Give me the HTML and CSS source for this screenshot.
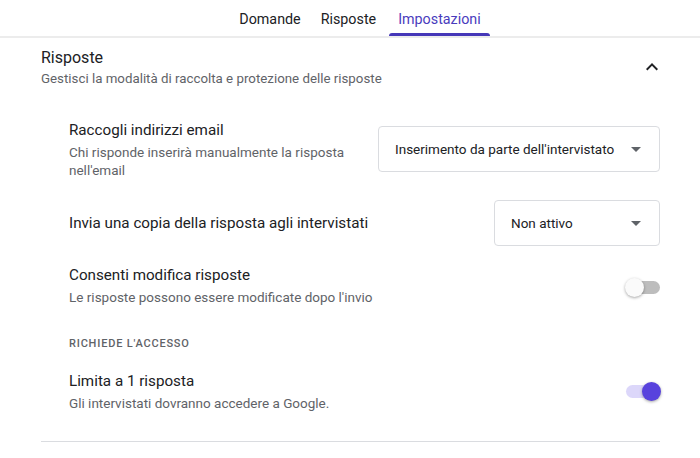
FILE: index.html
```html
<!DOCTYPE html>
<html lang="it">
<head>
    <meta charset="UTF-8">
    <meta name="viewport" content="width=device-width, initial-scale=1.0">
    <title>Impostazioni</title>
    <link rel="stylesheet" href="styles.css">
</head>
<body>
    <nav class="tabs">
        <a class="tab">Domande</a>
        <a class="tab">Risposte</a>
        <a class="tab active">Impostazioni</a>
    </nav>

    <section class="panel">
        <div class="panel-head">
            <div>
                <div class="panel-title">Risposte</div>
                <div class="panel-sub">Gestisci la modalità di raccolta e protezione delle risposte</div>
            </div>
            <svg class="chevron" width="24" height="24" viewBox="0 0 24 24"><path d="M7.4 15.4 12 10.8l4.6 4.6L18 14l-6-6-6 6z"/></svg>
        </div>

        <div class="rows">
            <div class="row row-email">
                <div class="row-text">
                    <div class="row-title">Raccogli indirizzi email</div>
                    <div class="row-sub">Chi risponde inserirà manualmente la risposta nell'email</div>
                </div>
                <div class="select select-wide">
                    <span>Inserimento da parte dell'intervistato</span>
                    <span class="caret"></span>
                </div>
            </div>

            <div class="row row-copy">
                <div class="row-text">
                    <div class="row-title">Invia una copia della risposta agli intervistati</div>
                </div>
                <div class="select select-narrow">
                    <span>Non attivo</span>
                    <span class="caret"></span>
                </div>
            </div>

            <div class="row row-edit">
                <div class="row-text">
                    <div class="row-title">Consenti modifica risposte</div>
                    <div class="row-sub">Le risposte possono essere modificate dopo l'invio</div>
                </div>
                <div class="switch"><span class="thumb"></span></div>
            </div>

            <div class="group-label">Richiede l'accesso</div>

            <div class="row row-limit">
                <div class="row-text">
                    <div class="row-title">Limita a 1 risposta</div>
                    <div class="row-sub">Gli intervistati dovranno accedere a Google.</div>
                </div>
                <div class="switch on"><span class="thumb"></span></div>
            </div>
        </div>
    </section>
</body>
</html>
```

FILE: styles.css
```css
body {
    font-family: Roboto, 'Liberation Sans', sans-serif;
    background-color: #fff;
    margin: 0;
    color: #202124;
}
.tabs {
    display: flex;
    justify-content: center;
    height: 36px;
    border-bottom: 2px solid #ececec;
    padding-left: 20px;
}
.tab {
    font-size: 14.3px;
    font-weight: 400;
    color: #202124;
    padding: 11px 9px 0;
    margin: 0;
    position: relative;
}
.tab + .tab {
    margin-left: 2px;
}
.tab.active {
    color: #4a3cbd;
    margin-left: 4px;
}
.tab.active::after {
    content: "";
    position: absolute;
    left: 0;
    right: 0;
    bottom: 0;
    height: 3px;
    border-radius: 3px 3px 0 0;
    background-color: #4537b8;
}
.panel {
    margin: 0 40px 0 41px;
    border-bottom: 1px solid #dadce0;
    padding-bottom: 29px;
}
.panel-head {
    display: flex;
    justify-content: space-between;
    align-items: center;
    padding-top: 9px;
}
.panel-title {
    font-size: 16px;
    color: #202124;
    line-height: 22px;
}
.panel-sub {
    font-size: 13.3px;
    color: #5f6368;
    margin-top: 2px;
}
.chevron {
    fill: #202124;
    margin-right: -4px;
}
.rows {
    padding-left: 28px;
    padding-top: 33px;
}
.row {
    display: flex;
    justify-content: space-between;
    align-items: center;
}
.row-text {
    flex: 1;
}
.row-title {
    font-size: 15.2px;
    line-height: 22px;
    color: #202124;
}
.row-sub {
    font-size: 13.5px;
    line-height: 18px;
    color: #5f6368;
    margin-top: 2px;
}
.row-email {
    align-items: flex-start;
}
.row-email .row-text {
    max-width: 290px;
}
.row-email .select {
    margin-top: 7px;
}
.row-copy {
    margin-top: 21px;
}
.row-edit {
    margin-top: 18px;
}
.row-limit {
    margin-top: 19px;
}
.select {
    box-sizing: border-box;
    height: 46px;
    border: 1px solid #dadce0;
    border-radius: 4px;
    display: flex;
    align-items: center;
    justify-content: space-between;
    padding: 0 16px;
    font-size: 13.5px;
    color: #202124;
}
.select-wide {
    width: 282px;
}
.select-narrow {
    width: 166px;
}
.caret {
    width: 0;
    height: 0;
    border-left: 5px solid transparent;
    border-right: 5px solid transparent;
    border-top: 5px solid #5f6368;
    margin-right: 2px;
}
.group-label {
    font-size: 11px;
    line-height: 14px;
    font-weight: 500;
    letter-spacing: 0.8px;
    text-transform: uppercase;
    color: #5f6368;
    margin-top: 31px;
}
.switch {
    position: relative;
    width: 34px;
    height: 13px;
    border-radius: 7px;
    background-color: #bdbdbd;
}
.row-edit .switch {
    margin-top: 4px;
}
.switch .thumb {
    position: absolute;
    left: -1px;
    top: -3px;
    width: 19px;
    height: 19px;
    border-radius: 50%;
    background-color: #fafafa;
    box-shadow: 0 1px 3px rgba(0, 0, 0, 0.35);
}
.switch.on {
    background-color: #dcd7fa;
}
.switch.on .thumb {
    left: auto;
    right: -1px;
    background-color: #5842dd;
}
```
